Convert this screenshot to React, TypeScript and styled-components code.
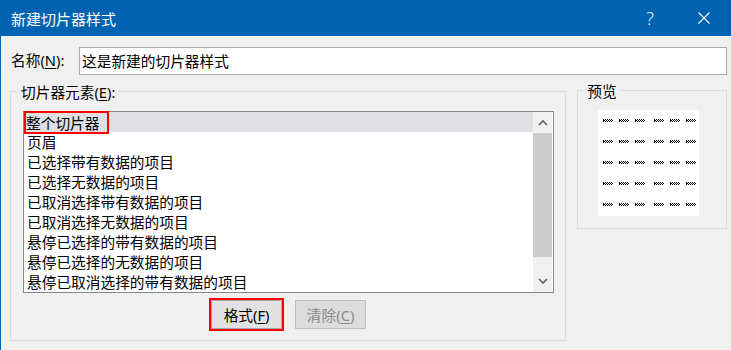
import React from "react";
import styled, { createGlobalStyle } from "styled-components";

const Global = createGlobalStyle`
  html, body { margin: 0; padding: 0; background: #f0f0f0; }
  body { font-family: "Noto Sans", "Noto Sans CJK SC", sans-serif; }
`;

const FONT = `"Noto Sans", "Noto Sans CJK SC", sans-serif`;

const Window = styled.div`
  width: 731px;
  height: 350px;
  box-sizing: border-box;
  border-left: 1px solid #0063b1;
  background: #f0f0f0;
  display: flex;
  flex-direction: column;
  font-family: ${FONT};
  font-size: 14.7px;
  color: #000;
  overflow: hidden;
`;

const TitleBar = styled.div`
  height: 36px;
  flex: none;
  background: #0063b1;
  color: #fff;
  display: flex;
  align-items: center;
  padding: 0 4px 0 10px;
`;

const Title = styled.div`
  flex: 1;
  font-size: 15px;
  line-height: 20px;
  padding-top: 2px;
`;

const CaptionButton = styled.div<{ $w: number }>`
  width: ${(p) => p.$w}px;
  height: 36px;
  display: flex;
  align-items: center;
  justify-content: center;
  font-family: "Open Sans", "DejaVu Sans", sans-serif;
  font-weight: 300;
  font-size: 18px;
`;

const Captions = styled.div`
  display: flex;
  gap: 8px;
`;

const Body = styled.div`
  flex: 1;
  padding: 11px 4px 0 9px;
  display: flex;
  flex-direction: column;
`;

const NameRow = styled.div`
  height: 28px;
  display: flex;
  align-items: center;
  padding-left: 1px;
`;

const Label = styled.div`
  width: 68px;
  flex: none;
  line-height: 20px;
  padding-bottom: 2px;
`;

const TextInput = styled.div`
  flex: 1;
  height: 28px;
  box-sizing: border-box;
  border: 1px solid #ababab;
  background: #fff;
  display: flex;
  align-items: center;
  padding-left: 2px;
  line-height: 20px;
`;

const Key = styled.span`
  text-decoration: underline;
  text-underline-offset: 2px;
  text-decoration-thickness: 1px;
`;

const Lower = styled.div`
  margin-top: 5px;
  display: flex;
  align-items: flex-start;
`;

const Group = styled.fieldset<{ $w: number; $h: number; $top?: number; $left?: number }>`
  margin: ${(p) => p.$top ?? 0}px 0 0 ${(p) => p.$left ?? 0}px;
  padding: 0;
  min-width: 0;
  width: ${(p) => p.$w}px;
  height: ${(p) => p.$h}px;
  box-sizing: border-box;
  border: 1px solid #dcdcdc;
  display: flex;
  flex-direction: column;
`;

const GroupTitle = styled.legend<{ $ml: number }>`
  margin-left: ${(p) => p.$ml}px;
  padding: 2px 3px 0;
  line-height: 18px;
  font-size: 14.7px;
`;

const ListBox = styled.div`
  margin: 10px 0 0 12px;
  width: 531px;
  height: 182px;
  box-sizing: border-box;
  border: 1px solid #828790;
  background: #fff;
  display: flex;
`;

const Items = styled.div`
  flex: 1;
  display: flex;
  flex-direction: column;
`;

const Item = styled.div<{ $selected?: boolean }>`
  height: 20px;
  flex: none;
  line-height: 20px;
  padding-left: 3px;
  white-space: nowrap;
  background: ${(p) => (p.$selected ? "#e0dfe4" : "transparent")};
`;

const Marked = styled.span`
  display: inline-block;
  margin-left: -1px;
  padding: 0 8px 0 0;
  outline: 2px solid #f00;
  outline-offset: 0;
  height: 19px;
  line-height: 20px;
  vertical-align: top;
  margin-top: 1px;
`;

const ScrollBar = styled.div`
  width: 19px;
  flex: none;
  margin-right: 1px;
  background: #f0f0f0;
  display: flex;
  flex-direction: column;
`;

const ArrowButton = styled.div`
  height: 21px;
  flex: none;
  display: flex;
  align-items: center;
  justify-content: center;
`;

const Thumb = styled.div`
  height: 124px;
  flex: none;
  background: #cdcdcd;
`;

const Track = styled.div`
  flex: 1;
`;

const ButtonRow = styled.div`
  margin-top: 7px;
  display: flex;
  justify-content: center;
  gap: 13px;
  padding-left: 1px;
`;

const Button = styled.div<{ $disabled?: boolean; $marked?: boolean }>`
  width: 71px;
  height: 29px;
  box-sizing: border-box;
  border: 1px solid ${(p) => (p.$disabled ? "#bfbfbf" : "#adadad")};
  background: ${(p) => (p.$disabled ? "#dcdcdc" : "#e1e1e1")};
  color: ${(p) => (p.$disabled ? "#8a8a8a" : "#000")};
  display: flex;
  align-items: center;
  justify-content: center;
  line-height: 20px;
  outline: ${(p) => (p.$marked ? "2px solid #f00" : "none")};
`;

const Preview = styled.div`
  margin: 10px 0 0 20px;
  width: 101px;
  height: 106px;
  background: #fff;
  box-sizing: border-box;
  padding: 9px 0 0 5px;
  display: flex;
  flex-direction: column;
  gap: 18px;
`;

const DashRow = styled.div`
  display: flex;
  gap: 9px;
  height: 3px;
`;

const DashGroup = styled.div`
  display: flex;
  gap: 6px;
`;

const DashSvg = styled.svg`
  display: block;
  flex: none;
`;

const Dash = () => {
  const cells: React.ReactNode[] = [];
  for (let y = 0; y < 3; y++) {
    for (let x = 0; x < 10; x++) {
      if ((x + y) % 2 === 0 || x === 0) {
        cells.push(<rect key={`${x}-${y}`} x={x} y={y} width="1" height="1" />);
      }
    }
  }
  return (
    <DashSvg width="10" height="3" viewBox="0 0 10 3" shapeRendering="crispEdges" fill="#000">
      {cells}
    </DashSvg>
  );
};

const items = [
  "整个切片器",
  "页眉",
  "已选择带有数据的项目",
  "已选择无数据的项目",
  "已取消选择带有数据的项目",
  "已取消选择无数据的项目",
  "悬停已选择的带有数据的项目",
  "悬停已选择的无数据的项目",
  "悬停已取消选择的带有数据的项目",
];

const Chevron = ({ up }: { up?: boolean }) => (
  <svg width="10" height="7" viewBox="0 0 10 7">
    <path
      d={up ? "M1 6 L5 2 L9 6" : "M1 1 L5 5 L9 1"}
      fill="none"
      stroke="#606060"
      strokeWidth="1.6"
    />
  </svg>
);

export default function App() {
  return (
    <>
      <Global />
      <Window>
        <TitleBar>
          <Title>新建切片器样式</Title>
          <Captions>
            <CaptionButton $w={46}>?</CaptionButton>
            <CaptionButton $w={46}>
              <svg width="12" height="12" viewBox="0 0 12 12">
                <path d="M0.5 0.5 L11.5 11.5 M11.5 0.5 L0.5 11.5" stroke="#fff" strokeWidth="1.1" />
              </svg>
            </CaptionButton>
          </Captions>
        </TitleBar>
        <Body>
          <NameRow>
            <Label>
              名称(<Key>N</Key>):
            </Label>
            <TextInput>这是新建的切片器样式</TextInput>
          </NameRow>
          <Lower>
            <Group $w={557} $h={260} $top={1}>
              <GroupTitle $ml={7}>
                切片器元素(<Key>E</Key>):
              </GroupTitle>
              <ListBox>
                <Items>
                  {items.map((t, i) =>
                    i === 0 ? (
                      <Item key={t} $selected>
                        <Marked>{t}</Marked>
                      </Item>
                    ) : (
                      <Item key={t}>{t}</Item>
                    )
                  )}
                </Items>
                <ScrollBar>
                  <ArrowButton>
                    <Chevron up />
                  </ArrowButton>
                  <Thumb />
                  <Track />
                  <ArrowButton>
                    <Chevron />
                  </ArrowButton>
                </ScrollBar>
              </ListBox>
              <ButtonRow>
                <Button $marked>
                  格式(<Key>F</Key>)
                </Button>
                <Button $disabled>
                  清除(<Key>C</Key>)
                </Button>
              </ButtonRow>
            </Group>
            <Group $w={150} $h={149} $left={11}>
              <GroupTitle $ml={6}>预览</GroupTitle>
              <Preview>
                {[0, 1, 2, 3, 4].map((r) => (
                  <DashRow key={r}>
                    {[0, 1].map((g) => (
                      <DashGroup key={g}>
                        <Dash />
                        <Dash />
                        <Dash />
                      </DashGroup>
                    ))}
                  </DashRow>
                ))}
              </Preview>
            </Group>
          </Lower>
        </Body>
      </Window>
    </>
  );
}
